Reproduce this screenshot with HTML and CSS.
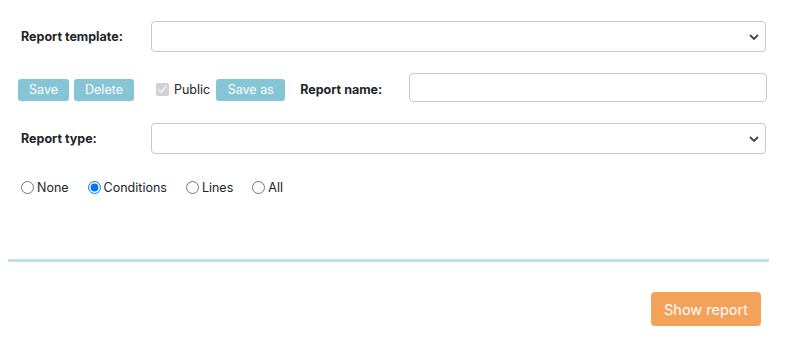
FILE: index.html
```html
<!DOCTYPE html>
<html lang="en">
<head>
  <meta charset="UTF-8">
  <title>Report</title>
  <meta name="viewport" content="width=device-width, initial-scale=1.0">
  <link rel="stylesheet" href="styles.css">
</head>
<body>

  <div class="panel">
    <div class="row row-template">
      <label class="field-label" for="template">Report template:</label>
      <select id="template" class="field-select"><option></option></select>
    </div>

    <div class="row row-actions">
      <button class="btn btn-info btn-save">Save</button>
      <button class="btn btn-info btn-delete">Delete</button>
      <label class="check">
        <input type="checkbox" checked disabled>
        <span>Public</span>
      </label>
      <button class="btn btn-info btn-saveas">Save as</button>
      <label class="field-label name-label" for="name">Report name:</label>
      <input id="name" class="field-input" type="text">
    </div>

    <div class="row row-type">
      <label class="field-label" for="type">Report type:</label>
      <select id="type" class="field-select"><option></option></select>
    </div>

    <div class="radios">
      <label class="radio"><input type="radio" name="detail"> None</label>
      <label class="radio"><input type="radio" name="detail" checked> Conditions</label>
      <label class="radio"><input type="radio" name="detail"> Lines</label>
      <label class="radio"><input type="radio" name="detail"> All</label>
    </div>

    <div class="divider"></div>

    <div class="footer">
      <button class="btn btn-warning">Show report</button>
    </div>
  </div>

</body>
</html>
```

FILE: styles.css
```css
* { box-sizing: border-box; }

body, html {
  margin: 0;
  padding: 0;
  background: #fff;
  color: #212529;
  font-family: 'Inter', 'Open Sans', sans-serif;
  font-size: 13px;
}

.panel {
  width: 761px;
  margin: 0 8px;
}

.row {
  display: flex;
  align-items: center;
}

.row-template {
  padding: 21px 3px 0 13px;
}

.row-type {
  padding: 21px 3px 0 13px;
}

.field-label {
  width: 130px;
  font-weight: 700;
  font-size: 12.5px;
  color: #212529;
}

.field-select {
  flex: 1;
  height: 31px;
  border: 1px solid #c8c8c8;
  border-radius: 4px;
  background: #fff url("data:image/svg+xml,%3Csvg xmlns='http://www.w3.org/2000/svg' width='10' height='6' viewBox='0 0 10 6'%3E%3Cpath d='M1 1l4 4 4-4' fill='none' stroke='%23444' stroke-width='1.8'/%3E%3C/svg%3E") no-repeat right 6px center;
  appearance: none;
  -webkit-appearance: none;
  font-family: inherit;
}

.row-actions {
  margin-top: 21px;
  padding-left: 10px;
}

.btn {
  border: none;
  border-radius: 3px;
  color: #fff;
  font-family: inherit;
  cursor: pointer;
}

.btn-info {
  background-color: #86c5d5;
  height: 22px;
  font-size: 12.5px;
  padding: 0 10px;
  margin-top: 4px;
}

.btn-save { width: 51px; }
.btn-delete { width: 60px; margin-left: 5px; }
.btn-saveas { width: 69px; margin-left: 6px; }

.check {
  display: flex;
  align-items: center;
  margin-left: 19px;
  margin-top: 4px;
  font-size: 12.5px;
}

.check input {
  margin: 0 5px 0 3px;
}

.name-label {
  width: auto;
  margin: 4px 27px 0 15px;
}

.field-input {
  width: 358px;
  height: 29px;
  border: 1px solid #c8c8c8;
  border-radius: 4px;
  font-family: inherit;
}

.radios {
  display: flex;
  align-items: center;
  gap: 19px;
  margin-top: 26px;
  padding-left: 13px;
}

.radio {
  display: flex;
  align-items: center;
  font-size: 12.5px;
}

.radio input {
  margin: 0 3px 0 0;
}

.divider {
  margin-top: 64px;
  height: 3px;
  background-color: #bfe0e7;
}

.footer {
  display: flex;
  justify-content: flex-end;
  padding: 30px 8px 0 0;
}

.btn-warning {
  background-color: #f4a15a;
  height: 34px;
  width: 110px;
  font-size: 14.5px;
  border-radius: 4px;
}
```
